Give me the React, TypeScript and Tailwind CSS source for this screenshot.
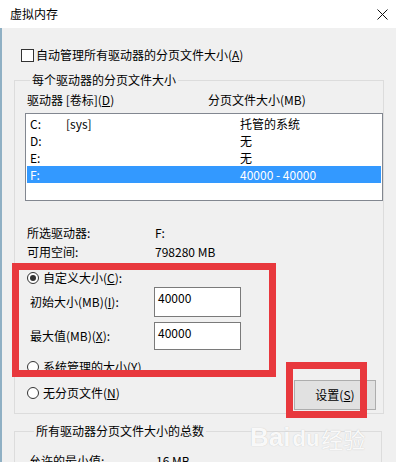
import React from 'react'

const font = { fontFamily: '"Noto Sans CJK SC", "Microsoft YaHei", sans-serif' }

function Radio({ checked }: { checked?: boolean }) {
  return (
    <span className="w-[12px] h-[12px] rounded-full border border-[#333] bg-white flex items-center justify-center shrink-0">
      {checked && <span className="w-[6px] h-[6px] rounded-full bg-[#333]"></span>}
    </span>
  )
}

const drives = [
  { d: 'C:', label: '[sys]', size: '托管的系统' },
  { d: 'D:', label: '', size: '无' },
  { d: 'E:', label: '', size: '无' },
  { d: 'F:', label: '', size: '40000 - 40000', selected: true },
]

export default function App() {
  return (
    <div
      style={font}
      className="relative w-[396px] h-[462px] overflow-hidden bg-[#f0f0f0] text-[12px] leading-[16px] text-black shadow-[inset_2px_0_0_#8fb0c4]"
    >
      {/* title bar */}
      <div className="h-[28px] bg-white flex items-center pl-[10px] pr-[8px]">
        <span>虚拟内存</span>
        <svg className="ml-auto" width="11" height="11" viewBox="0 0 11 11">
          <path d="M0.5 0.5 L10.5 10.5 M10.5 0.5 L0.5 10.5" stroke="#111" strokeWidth="1" />
        </svg>
      </div>

      {/* auto manage checkbox */}
      <div className="mt-[19px] ml-[21px] h-[16px] flex items-center">
        <span className="w-[13px] h-[13px] border border-[#333] bg-white shrink-0"></span>
        <span className="ml-[2px]">自动管理所有驱动器的分页文件大小(<u>A</u>)</span>
      </div>

      {/* per-drive group */}
      <fieldset className="mt-[9px] ml-[14px] w-[368px] border border-[#dcdcdc] pl-[10px] pb-[3px]">
        <legend className="ml-[5px] px-[2px] leading-[16px]">每个驱动器的分页文件大小</legend>

        <div className="mt-[4px] h-[16px] flex">
          <span className="ml-[2px] w-[181px]">驱动器 [卷标](<u>D</u>)</span>
          <span>分页文件大小(MB)</span>
        </div>

        <div className="mt-[5px] w-[358px] h-[88px] bg-white border border-[#828790] pt-[1px] px-[1px]">
          {drives.map((r) => (
            <div
              key={r.d}
              className={`h-[17px] leading-[17px] flex pl-[3px] ${r.selected ? 'bg-[#3399ff] text-white' : ''}`}
            >
              <span className="w-[36px]">{r.d}</span>
              <span className="w-[174px]">{r.label}</span>
              <span>{r.size}</span>
            </div>
          ))}
        </div>

        <div className="mt-[24px] h-[16px] flex">
          <span className="ml-[2px] w-[128px]">所选驱动器:</span>
          <span>F:</span>
        </div>
        <div className="mt-[3px] h-[16px] flex">
          <span className="ml-[2px] w-[128px]">可用空间:</span>
          <span>798280 MB</span>
        </div>

        <div className="mt-[10px] h-[16px] flex items-center ml-[2px]">
          <Radio checked />
          <span className="ml-[4px]">自定义大小(<u>C</u>):</span>
        </div>

        <div className="mt-[1px] h-[30px] flex items-center">
          <span className="ml-[5px] w-[124px]">初始大小(MB)(<u>I</u>):</span>
          <div className="w-[87px] h-[30px] bg-white border border-[#7a7a7a] pt-[2px] pl-[3px]">40000</div>
        </div>
        <div className="mt-[5px] h-[28px] flex items-center">
          <span className="ml-[5px] w-[124px]">最大值(MB)(<u>X</u>):</span>
          <div className="w-[87px] h-[28px] bg-white border border-[#7a7a7a] pt-[2px] pl-[3px]">40000</div>
        </div>

        <div className="mt-[9px] h-[16px] flex items-center ml-[2px]">
          <Radio />
          <span className="ml-[4px]">系统管理的大小(<u>Y</u>)</span>
        </div>

        <div className="mt-[5px] h-[30px] flex items-start">
          <div className="mt-[5px] h-[16px] flex items-center ml-[2px]">
            <Radio />
            <span className="ml-[4px]">无分页文件(<u>N</u>)</span>
          </div>
          <button className="ml-auto mr-[7px] w-[82px] h-[30px] bg-[#e1e1e1] border border-[#adadad] text-[12px]">
            设置(<u>S</u>)
          </button>
        </div>
      </fieldset>

      {/* totals group */}
      <fieldset className="mt-[9px] ml-[14px] w-[368px] h-[60px] border border-[#dcdcdc] pl-[14px]">
        <legend className="ml-[5px] px-[2px] leading-[16px]">所有驱动器分页文件大小的总数</legend>
        <div className="mt-[14px] h-[16px] flex">
          <span className="w-[127px]">允许的最小值:</span>
          <span>16 MB</span>
        </div>
      </fieldset>

      {/* red annotation boxes */}
      <div className="absolute left-[12px] top-[263px] w-[264px] h-[114px] border-[7px] border-[#e8383d]"></div>
      <div className="absolute left-[286px] top-[362px] w-[81px] h-[56px] border-[7px] border-[#e8383d]"></div>

      {/* watermark */}
      <div className="absolute left-[250px] top-[424px] flex items-end text-white/90 [text-shadow:0_0_1px_#bbb]">
        <span className="text-[26px] leading-[26px] font-bold" style={{ fontFamily: '"Liberation Sans", Arial, sans-serif' }}>Bai</span>
        <span className="text-[22px] leading-[22px] font-bold ml-[2px]" style={{ fontFamily: '"Liberation Sans", Arial, sans-serif' }}>du</span>
        <span className="text-[22px] leading-[24px] ml-[2px]">经验</span>
      </div>
    </div>
  )
}
